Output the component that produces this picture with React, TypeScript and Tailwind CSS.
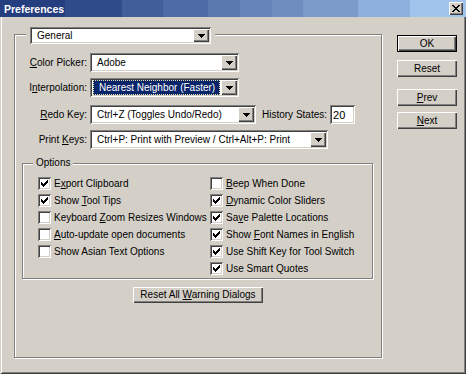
import React from "react";

const sunken =
  "shadow-[inset_1px_1px_0_#808080,inset_-1px_-1px_0_#ffffff,inset_2px_2px_0_#404040,inset_-2px_-2px_0_#d4d0c8]";
const raised =
  "shadow-[inset_1px_1px_0_#ffffff,inset_-1px_-1px_0_#404040,inset_-2px_-2px_0_#808080]";
const etched =
  "border border-[#808080] shadow-[inset_1px_1px_0_#ffffff,1px_1px_0_#ffffff]";

function Arrow() {
  return (
    <svg width="7" height="4" viewBox="0 0 7 4" shapeRendering="crispEdges">
      <rect x="0" y="0" width="7" height="1" fill="#000" />
      <rect x="1" y="1" width="5" height="1" fill="#000" />
      <rect x="2" y="2" width="3" height="1" fill="#000" />
      <rect x="3" y="3" width="1" height="1" fill="#000" />
    </svg>
  );
}

function Check() {
  const px: [number, number, number][] = [
    [6, 0, 1],
    [5, 1, 2],
    [0, 2, 1],
    [4, 2, 3],
    [0, 3, 2],
    [3, 3, 3],
    [0, 4, 5],
    [1, 5, 3],
    [2, 6, 1],
  ];
  return (
    <svg width="7" height="7" viewBox="0 0 7 7" shapeRendering="crispEdges">
      {px.map(([x, y, w], i) => (
        <rect key={i} x={x} y={y} width={w} height="1" fill="#000" />
      ))}
    </svg>
  );
}

function CloseX() {
  const rows: [number, number][][] = [
    [[0, 2], [6, 2]],
    [[1, 2], [5, 2]],
    [[2, 4]],
    [[3, 2]],
    [[2, 4]],
    [[1, 2], [5, 2]],
    [[0, 2], [6, 2]],
  ];
  return (
    <svg width="8" height="7" viewBox="0 0 8 7" shapeRendering="crispEdges">
      {rows.map((r, y) =>
        r.map(([x, w], i) => (
          <rect key={`${y}-${i}`} x={x} y={y} width={w} height="1" fill="#000" />
        ))
      )}
    </svg>
  );
}

function Combo({
  width,
  height,
  children,
}: {
  width: number;
  height: number;
  children: React.ReactNode;
}) {
  return (
    <div
      className={`flex shrink-0 bg-white p-[2px] ${sunken}`}
      style={{ width, height }}
    >
      <div className="flex-1 flex items-center overflow-hidden whitespace-nowrap">
        {children}
      </div>
      <div
        className={`w-[16px] h-full shrink-0 bg-[#d4d0c8] flex items-center justify-center ${raised}`}
      >
        <Arrow />
      </div>
    </div>
  );
}

function U({ children }: { children: React.ReactNode }) {
  return <span className="underline underline-offset-[1px]">{children}</span>;
}

function CheckBox({ checked, label }: { checked: boolean; label: React.ReactNode }) {
  return (
    <div className="flex items-center h-[17px] whitespace-nowrap">
      <div
        className={`w-[13px] h-[13px] shrink-0 bg-white flex items-center justify-center ${sunken}`}
      >
        {checked ? <Check /> : null}
      </div>
      <span className="ml-[3px]">{label}</span>
    </div>
  );
}

function Button({
  children,
  isDefault,
  className,
}: {
  children: React.ReactNode;
  isDefault?: boolean;
  className?: string;
}) {
  return (
    <div
      className={`h-[17px] w-[60px] bg-[#d4d0c8] flex items-center justify-center ${
        isDefault ? "border border-black" : ""
      } ${raised} ${className ?? ""}`}
    >
      <span>{children}</span>
    </div>
  );
}

const bands: [number, string][] = [
  [65, "#243e80"],
  [57, "#2f4c8b"],
  [41, "#3f5e9a"],
  [45, "#4d6ca5"],
  [32, "#5a79ae"],
  [32, "#6585b8"],
  [31, "#6e8ec0"],
  [55, "#7b9bca"],
  [52, "#8cafdc"],
];

export default function App() {
  return (
    <div className="w-[466px] h-[374px] overflow-hidden bg-[#d4d0c8] font-['Liberation_Sans',Arial,sans-serif] text-[10px] leading-[12px] text-black flex flex-col">
      {/* Title bar */}
      <div className="h-[17px] flex shrink-0">
        {bands.map(([w, c], i) => (
          <div
            key={i}
            className="h-full flex items-center"
            style={{ width: w, backgroundColor: c }}
          >
            {i === 0 ? (
              <span className="pl-[4px] text-white font-bold text-[10.5px] whitespace-nowrap">
                Preferences
              </span>
            ) : null}
          </div>
        ))}
        <div className="flex-1 h-full bg-[#a0c4ec] flex items-start justify-end pt-[2px] pr-[3px]">
          <div
            className={`w-[14px] h-[13px] bg-[#d4d0c8] flex items-center justify-center ${raised}`}
          >
            <CloseX />
          </div>
        </div>
      </div>

      {/* Body */}
      <div className="flex-1 flex shadow-[inset_1px_0_0_#d4d0c8,inset_-1px_-1px_0_#404040,inset_2px_0_0_#ffffff,inset_-2px_-2px_0_#808080]">
        {/* Main group */}
        <div
          className={`relative ml-[14px] mt-[17px] w-[368px] h-[324px] flex flex-col ${etched}`}
        >
          <div className="absolute left-[11px] -top-[8px] px-[4px] bg-[#d4d0c8]">
            <Combo width={181} height={17}>
              <span className="pl-[5px]">General</span>
            </Combo>
          </div>

          <div className="flex flex-col pt-[18px]">
            <div className="flex items-center h-[19px]">
              <div className="w-[75px] pr-[3px] text-right whitespace-nowrap">
                <U>C</U>olor Picker:
              </div>
              <Combo width={149} height={19}>
                <span className="pl-[5px]">Adobe</span>
              </Combo>
            </div>

            <div className="flex items-center h-[19px] mt-[6px]">
              <div className="w-[75px] pr-[3px] text-right whitespace-nowrap">
                I<U>n</U>terpolation:
              </div>
              <Combo width={149} height={19}>
                <div className="ml-[1px] mr-[1px] h-full flex-1 bg-[#0a246a] text-white flex items-center pl-[5px] border border-dotted border-[#e8e4b0]">
                  <span>Nearest Neighbor (Faster)</span>
                </div>
              </Combo>
            </div>

            <div className="flex items-center h-[19px] mt-[8px]">
              <div className="w-[75px] pr-[3px] text-right whitespace-nowrap">
                <U>R</U>edo Key:
              </div>
              <Combo width={166} height={19}>
                <span className="pl-[5px]">Ctrl+Z (Toggles Undo/Redo)</span>
              </Combo>
              <span className="ml-[6px] whitespace-nowrap">History States:</span>
              <div
                className={`ml-[3px] w-[25px] h-[19px] shrink-0 bg-white flex items-center pl-[3px] text-[11px] ${sunken}`}
              >
                <span>20</span>
              </div>
            </div>

            <div className="flex items-center h-[19px] mt-[6px]">
              <div className="w-[75px] pr-[3px] text-right whitespace-nowrap">
                Print <U>K</U>eys:
              </div>
              <Combo width={238} height={19}>
                <span className="pl-[5px]">
                  Ctrl+P: Print with Preview / Ctrl+Alt+P: Print
                </span>
              </Combo>
            </div>

            {/* Options group */}
            <div
              className={`relative ml-[7px] mt-[14px] w-[351px] h-[116px] ${etched}`}
            >
              <div className="absolute left-[10px] -top-[7px] px-[3px] bg-[#d4d0c8]">
                Options
              </div>
              <div className="flex pt-[11px] pl-[15px]">
                <div className="w-[172px] flex flex-col">
                  <CheckBox checked label={<>E<U>x</U>port Clipboard</>} />
                  <CheckBox checked label={<>Show <U>T</U>ool Tips</>} />
                  <CheckBox
                    checked={false}
                    label={<>Keyboard <U>Z</U>oom Resizes Windows</>}
                  />
                  <CheckBox
                    checked={false}
                    label={<><U>A</U>uto-update open documents</>}
                  />
                  <CheckBox checked={false} label="Show Asian Text Options" />
                </div>
                <div className="flex flex-col">
                  <CheckBox checked={false} label={<><U>B</U>eep When Done</>} />
                  <CheckBox checked label={<><U>D</U>ynamic Color Sliders</>} />
                  <CheckBox checked label={<>Sa<U>v</U>e Palette Locations</>} />
                  <CheckBox
                    checked
                    label={<>Show <U>F</U>ont Names in English</>}
                  />
                  <CheckBox checked label="Use Shift Key for Tool Switch" />
                  <CheckBox checked label="Use Smart Quotes" />
                </div>
              </div>
            </div>

            <div className="mt-[8px] flex justify-center">
              <div
                className={`w-[130px] h-[16px] bg-[#d4d0c8] flex items-center justify-center whitespace-nowrap ${raised}`}
              >
                <span>
                  Reset All <U>W</U>arning Dialogs
                </span>
              </div>
            </div>
          </div>
        </div>

        {/* Right buttons */}
        <div className="ml-[15px] pt-[18px] flex flex-col">
          <Button isDefault>OK</Button>
          <Button className="mt-[8px]">Reset</Button>
          <Button className="mt-[12px]">
            <U>P</U>rev
          </Button>
          <Button className="mt-[6px]">
            <U>N</U>ext
          </Button>
        </div>
      </div>
    </div>
  );
}
